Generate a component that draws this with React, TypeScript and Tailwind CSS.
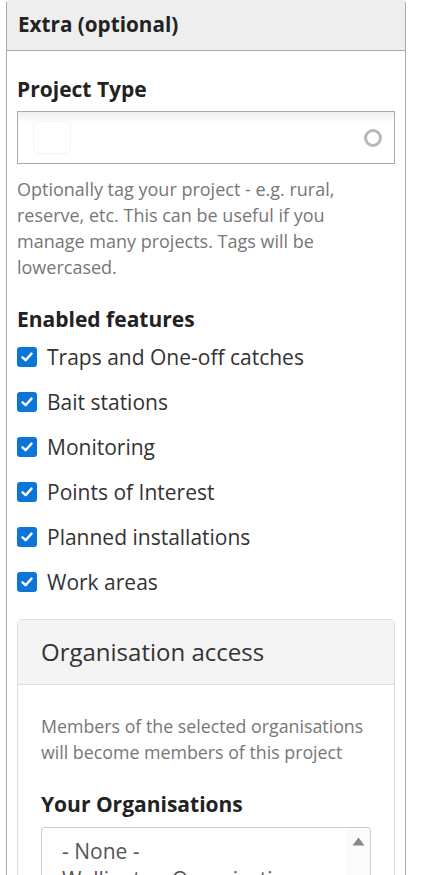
const features = [
  'Traps and One-off catches',
  'Bait stations',
  'Monitoring',
  'Points of Interest',
  'Planned installations',
  'Work areas',
];

function CheckBox() {
  return (
    <span className="flex h-[20px] w-[20px] shrink-0 items-center justify-center rounded-[3px] bg-[#0b75d8]">
      <svg width="14" height="14" viewBox="0 0 14 14">
        <path d="M2.5 7.3 L5.6 10.2 L11.5 3.6" fill="none" stroke="#fff" strokeWidth="2.4" strokeLinecap="round" strokeLinejoin="round" />
      </svg>
    </span>
  );
}

export default function App() {
  return (
    <div className="h-[875px] w-[423px] overflow-hidden bg-white font-['Open_Sans',sans-serif] text-[#333]">
      <div className="ml-[6px] w-[400px] rounded-t-[4px] border border-t-0 border-[#aaa]">
        {/* header */}
        <div className="flex h-[51px] items-center border-b border-[#aaa] bg-[#eee] px-[11px] pb-[1px]">
          <h3 className="text-[20.7px] font-bold text-[#222]">Extra (optional)</h3>
        </div>

        <div className="px-[10px] pt-[24px]">
          <label className="block text-[21px] font-bold leading-[28px] text-[#222]">Project Type</label>
          <div className="mt-[8px] flex h-[53px] items-center justify-between border border-[#aaa] bg-[linear-gradient(#efefef,#fff_12px)] pl-[15px] pr-[12px]">
            <div className="h-[33px] w-[38px] rounded-[5px] border border-[#f3f3f3] bg-white" />
            <span className="h-[18px] w-[18px] rounded-full border-[3px] border-[#b8b8b8] blur-[0.4px]" />
          </div>
          <p className="mt-[12px] text-[18px] leading-[26px] text-[#777]">
            Optionally tag your project - e.g. rural, reserve, etc. This can be useful if you manage many projects. Tags will be lowercased.
          </p>

          <h4 className="mt-[25px] text-[21px] font-bold leading-[28px] text-[#222]">Enabled features</h4>
          <div className="mt-[1px] flex flex-col">
            {features.map((f) => (
              <div key={f} className="flex h-[45px] items-center gap-[10px]">
                <CheckBox />
                <span className="text-[21px] leading-[28px] text-[#333]">{f}</span>
              </div>
            ))}
          </div>

          {/* organisation card */}
          <div className="mt-[15px] rounded-t-[5px] border border-b-0 border-[#ddd]">
            <div className="flex h-[65px] items-center border-b border-[#ddd] bg-[#f4f4f4] px-[23px]">
              <h3 className="text-[24px] leading-[30px] text-[#333]">Organisation access</h3>
            </div>
            <div className="px-[23px] pt-[28px]">
              <p className="text-[17.8px] leading-[26px] text-[#777]">
                Members of the selected organisations will become members of this project
              </p>
              <h4 className="mt-[25px] text-[21px] font-bold leading-[28px] text-[#222]">Your Organisations</h4>
              <div className="mt-[9px] flex h-[80px] w-[330px] overflow-hidden rounded-t-[4px] border border-b-0 border-[#ccc] bg-white">
                <div className="flex-1 pl-[20px] pt-[9px] text-[21px] leading-[28px] text-[#555]">
                  <div>- None -</div>
                  <div>Wellington Organisation</div>
                </div>
                <div className="flex w-[23px] justify-center bg-[#fbfbfb] pt-[9px]">
                  <svg width="13" height="9" viewBox="0 0 13 9">
                    <path d="M6.5 0.5 L12.5 8.5 L0.5 8.5 Z" fill="#888" />
                  </svg>
                </div>
              </div>
            </div>
          </div>
        </div>
      </div>
    </div>
  );
}
